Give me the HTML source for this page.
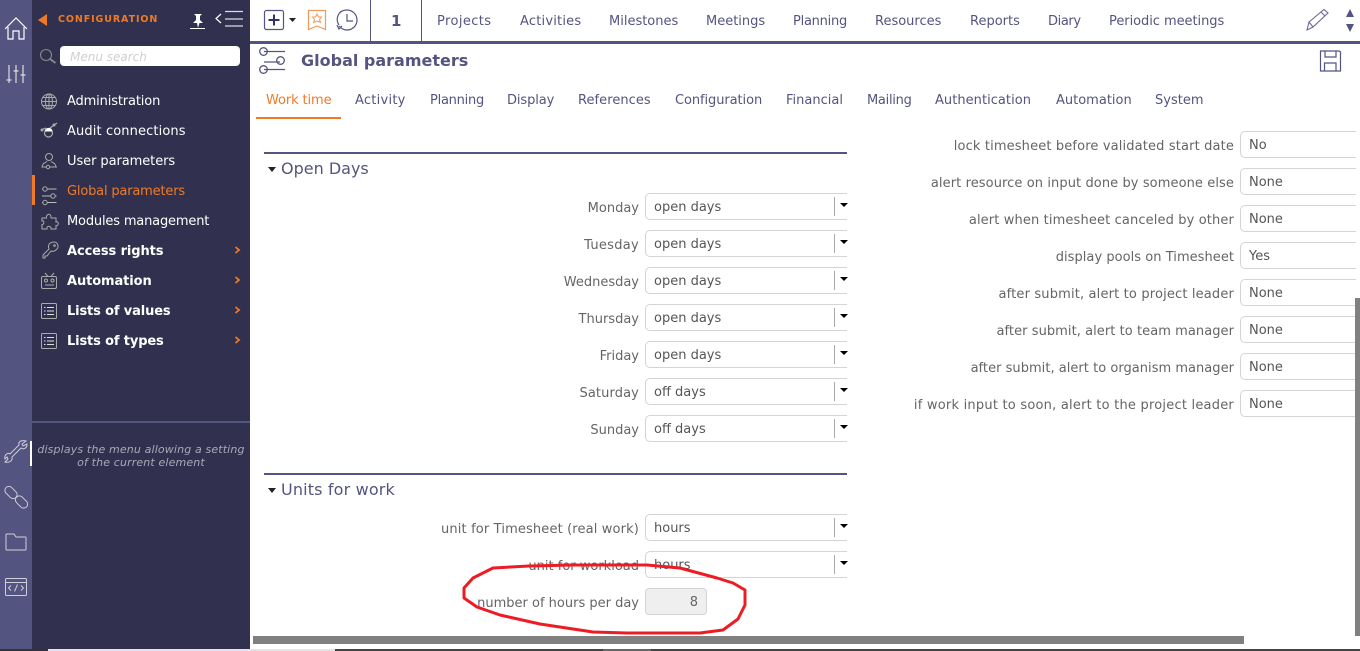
<!DOCTYPE html>
<html><head><meta charset="utf-8"><style>
html,body{margin:0;padding:0;background:#fff;width:1360px;height:651px;overflow:hidden}
body{position:relative;font-family:"DejaVu Sans","Liberation Sans",sans-serif;font-size:13px;color:#656565}
.a{position:absolute;white-space:nowrap}
.m{left:67px;color:#fff;font-size:13px;line-height:16px}
.b{font-weight:bold;letter-spacing:-.1px}
.t{top:14px;color:#545480;font-size:13px;line-height:16px}
.tb{top:93px;color:#545480;font-size:13px;line-height:16px}
.l{text-align:right;line-height:16px;color:#656565}
.s{position:absolute;height:25px;border:1px solid #d4d4d4;border-right:none;border-radius:5px 0 0 5px;background:#fff;box-sizing:content-box;color:#555;line-height:28px;padding-left:8px}
.s i{position:absolute;left:188px;top:3px;width:1px;height:19px;background:#aaa}
.s b{position:absolute;left:194px;top:9px;border:4px solid transparent;border-top:4px solid #000;border-bottom:0}
svg{position:absolute;overflow:visible;fill:none}
</style></head><body>
<div class="a" style="left:0;top:0;width:32px;height:649px;background:#545480"></div>
<div class="a" style="left:32px;top:0;width:218px;height:649px;background:#31314f"></div>
<div class="a" style="left:32px;top:421px;width:218px;height:2px;background:#545480"></div>
<div class="a" style="left:32px;top:175px;width:3px;height:30px;background:#f07a24"></div>
<div class="a" style="left:30px;top:441px;width:2px;height:25px;background:#fff"></div>
<div class="a" style="left:0;top:649px;width:48px;height:2px;background:#333"></div>
<div class="a" style="left:48px;top:649px;width:287px;height:2px;background:#e4e4e4"></div>

<!-- left rail icons -->
<svg style="left:0;top:0" width="32" height="100" stroke="#fff" stroke-width="1.200">
<path d="M5 29 L16 18 L27 29 M8 27 V39 H13 V31 H19 V39 H24 V27"/>
<g stroke="#ddd"><path d="M9 65V83M16 65V83M23 65V83M6.500 80H11.500M13.500 71H18.500M20.500 75H25.500"/></g>
</svg>
<svg style="left:0;top:430px" width="32" height="170" stroke="#cfcfdc" stroke-width="1">
<path d="M19 15C18 11 22 10 26 11L22 14L23 16L27 14C27 18 24 20 21 18L12 27C13 31 9 33 5 32L8 29L7 27L5 29C4 26 7 22 10 24Z"/>
<rect x="4" y="58.500" width="14" height="8" rx="4" transform="rotate(45 11 62.500)"/>
<rect x="14.500" y="68" width="14" height="8" rx="4" transform="rotate(45 21.500 72)"/>
<path d="M6 105V119C6 120 6 120 7 120H25C26 120 26 120 26 119V108C26 107 26 107 25 107H16L14 104H7C6 104 6 104 6 105Z"/>
<rect x="5.500" y="148.500" width="21" height="17" rx="1"/><path d="M6 152.500H26M11 155.500L8.500 158L11 160.500M21 155.500L23.500 158L21 160.500M17.500 154.500L14.500 161.500"/>
</svg>

<!-- sidebar header -->
<div class="a" style="left:38px;top:14px;width:0;height:0;border:6px solid transparent;border-right:9px solid #f07a24;border-left:0"></div>
<div class="a" style="left:58px;top:13px;color:#f07a24;font-size:9.500px;font-weight:bold;letter-spacing:.9px;line-height:14px">CONFIGURATION</div>
<svg style="left:0;top:0" width="250" height="120">
<path d="M194 14H202L200 16V20L203 23H199.500L198 28L197 23H193L196 20V16Z" fill="#fff"/><path d="M190 28.500H205" stroke="#fff"/>
<path d="M221 14L216 18.500L221 23" stroke="#fff" stroke-width="1.200"/><path d="M225 11.500H243M225 19H243M225 26H243" stroke="#ddd" stroke-width="1.300"/>
<circle cx="46" cy="55" r="5.500" stroke="#888" stroke-width="1.100"/><path d="M50 59L55.500 63" stroke="#888" stroke-width="2"/>
<g stroke="#aaa" stroke-width="1"><circle cx="49" cy="101.500" r="7.500"/><ellipse cx="49" cy="101.500" rx="3.500" ry="7.500"/><path d="M41.500 101.500H56.500M42.500 97.500H55.500M42.500 105.500H55.500M49 94V109"/></g>
</svg>
<div class="a" style="left:60px;top:46px;width:180px;height:20px;background:#fff;border-radius:4px;color:#d0d0d0;font-style:italic;font-size:12px;line-height:22px;text-indent:10px">Menu search</div>

<svg style="left:0;top:120px" width="250" height="240" stroke="#aaa" stroke-width="1">
<path d="M41 10L46 8M57 3L50 8" stroke-width="1.300"/><circle cx="54" cy="5" r="1" fill="#aaa"/><circle cx="42" cy="10" r="1" fill="#aaa"/>
<circle cx="48.500" cy="13" r="4" stroke-width="1.200"/><path d="M45.500 11C46 7.500 51 7.500 52 11Z" fill="#fff" stroke="#fff"/>
<circle cx="49" cy="37" r="3.500"/><path d="M42 47C42.500 43 45 43 47 41.500M56 47C55.500 43 53 43 51 41.500"/><path d="M41.500 47H46M50 47H57"/><circle cx="48" cy="47" r="1.700"/>
<path d="M42 69H56.500M42 76H56.500M42 82.500H56.500" stroke="#bbb"/><circle cx="45" cy="69" r="2.200" fill="#31314f"/><circle cx="53" cy="76" r="2.200" fill="#31314f"/><circle cx="45" cy="82.500" r="2.200" fill="#31314f"/>
<path d="M42 98H46.500C45.500 94 51.500 92 51 98H56V102C59 100.500 59 106.500 56 105.500V109H51C52 106 46 105 47 109H42V104.500C44 105 45 100 42 101Z"/>
<path d="M49 129C47 124 51 122 54 122C58 122 59 127 57 129C55 131 53 132 51 131L47 136L45 136L45 138L43 138L43 135Z"/><circle cx="54.500" cy="125.500" r=".8"/>
<rect x="41.500" y="156.500" width="15" height="12" rx="1.500"/><circle cx="46" cy="160.500" r="1.500"/><circle cx="52.500" cy="160.500" r="1.500"/><path d="M45 165H54M45 153L48 156.500M54 153L51 156.500"/>
<rect x="41.500" y="183.500" width="15" height="15" rx="1"/><path d="M47 187.500H54M47 191H54M47 194.500H54M44 187.500H45.500M44 191H45.500M44 194.500H45.500" stroke="#ddd"/>
<rect x="41.500" y="213.500" width="15" height="15" rx="1"/><path d="M47 217.500H54M47 221H54M47 224.500H54M44 217.500H45.500M44 221H45.500M44 224.500H45.500" stroke="#ddd"/>
<g stroke="#f07a24" stroke-width="1.800"><path d="M235.500 127L239 130L235.500 133M235.500 157L239 160L235.500 163M235.500 187L239 190L235.500 193M235.500 217L239 220L235.500 223"/></g>
</svg>

<div class="a m" style="top:94px;letter-spacing:-.14px">Administration</div>
<div class="a m" style="top:124px;letter-spacing:.12px">Audit connections</div>
<div class="a m" style="top:154px;letter-spacing:-.07px">User parameters</div>
<div class="a m" style="top:184px;color:#f07a24;letter-spacing:-.18px">Global parameters</div>
<div class="a m" style="top:214px;letter-spacing:-.17px">Modules management</div>
<div class="a m b" style="top:244px">Access rights</div>
<div class="a m b" style="top:274px">Automation</div>
<div class="a m b" style="top:304px;letter-spacing:-.14px">Lists of values</div>
<div class="a m b" style="top:334px;letter-spacing:-.14px">Lists of types</div>
<div class="a" style="left:32px;top:443px;width:218px;text-align:center;color:#a9a9b8;font-style:italic;font-size:11px;line-height:13px;letter-spacing:.14px">displays the menu allowing a setting<br>of the current element</div>

<!-- top bar -->
<div class="a" style="left:250px;top:41px;width:1110px;height:3px;background:#545480"></div>
<div class="a" style="left:370px;top:0;width:1px;height:41px;background:#545480"></div>
<div class="a" style="left:421px;top:0;width:1px;height:41px;background:#545480"></div>
<svg style="left:250px;top:0" width="120" height="80">
<rect x="14.500" y="10.500" width="19" height="19" rx="2" stroke="#545480" stroke-width="1.200"/><path d="M24 14.500V25.500M18.500 20H29.500" stroke="#31316f" stroke-width="2"/>
<path d="M39 18H46L42.500 22Z" fill="#222"/>
<path d="M58.500 10.500H75.500V29.500L67 26L58.500 29.500Z" stroke="#f2995a" stroke-width="1.200"/><path d="M67 14L68.500 17H71.500L69.500 19.500L70.500 22.500L67 21L63.500 22.500L64.500 19.500L62.500 17H65.500Z" stroke="#f2995a"/>
<path d="M89 25C85 19 88 10 97 10C103 10 107 15 107 20C107 26 102 30 97 30C93 30 91 28 89 26M87 25L89 29L92 26M97 14V21H103" stroke="#545480" stroke-width="1.200"/>
<g stroke="#545480" stroke-width="1.300"><path d="M14 51.500H35M14 62H30M14 69.500H35"/><circle cx="13.500" cy="51.500" r="3.800"/><circle cx="30.500" cy="60.500" r="3.800"/><circle cx="13.500" cy="69.500" r="3.800"/></g>
</svg>
<div class="a" style="left:391px;top:12px;color:#545480;font-weight:bold;font-size:15px;line-height:18px">1</div>
<div class="a t" style="left:437px;letter-spacing:.4px">Projects</div>
<div class="a t" style="left:520px;letter-spacing:.2px">Activities</div>
<div class="a t" style="left:609px">Milestones</div>
<div class="a t" style="left:706px">Meetings</div>
<div class="a t" style="left:793px;letter-spacing:-.25px">Planning</div>
<div class="a t" style="left:875px">Resources</div>
<div class="a t" style="left:970px">Reports</div>
<div class="a t" style="left:1048px;letter-spacing:-.4px">Diary</div>
<div class="a t" style="left:1109px;letter-spacing:-.05px">Periodic meetings</div>
<svg style="left:1300px;top:0" width="60" height="80">
<path d="M7 30L9 22L24 9.500L28 13L13 27Z M9 22L13 27M21 12L25 16" stroke="#6a6a96" stroke-width="1.100"/>
<path d="M50 9L46 17H54Z M46 24H54L50 32Z" fill="#545480"/>
<path d="M20.500 51H39L40.500 52V71H20.500ZM25 51V57H36V51M24.500 71V63H36V71" stroke="#545480" stroke-width="1.200"/>
</svg>

<!-- heading + tabs -->
<div class="a" style="left:301px;top:51px;color:#545480;font-size:16px;font-weight:bold;line-height:20px">Global parameters</div>
<div class="a tb" style="left:266px;color:#f07a24;letter-spacing:-.1px">Work time</div>
<div class="a" style="left:256px;top:117px;width:85px;height:2px;background:#f07a24"></div>
<div class="a tb" style="left:355px;letter-spacing:.25px">Activity</div>
<div class="a tb" style="left:430px;letter-spacing:-.25px">Planning</div>
<div class="a tb" style="left:507px;letter-spacing:-.1px">Display</div>
<div class="a tb" style="left:578px;letter-spacing:.05px">References</div>
<div class="a tb" style="left:675px;letter-spacing:-.08px">Configuration</div>
<div class="a tb" style="left:786px">Financial</div>
<div class="a tb" style="left:867px;letter-spacing:-.28px">Mailing</div>
<div class="a tb" style="left:935px;letter-spacing:.04px">Authentication</div>
<div class="a tb" style="left:1056px">Automation</div>
<div class="a tb" style="left:1155px">System</div>

<!-- Open Days -->
<div class="a" style="left:264px;top:152px;width:583px;height:2px;background:#545480"></div>
<div class="a" style="left:268px;top:167px;border:4px solid transparent;border-top:5px solid #222;border-bottom:0"></div>
<div class="a" style="left:281px;top:159px;font-size:16px;line-height:19px;color:#545480">Open Days</div>
<div class="a" style="left:264px;top:473px;width:583px;height:2px;background:#545480"></div>
<div class="a" style="left:268px;top:488px;border:4px solid transparent;border-top:5px solid #222;border-bottom:0"></div>
<div class="a" style="left:281px;top:480px;font-size:16px;line-height:19px;color:#545480;letter-spacing:.15px">Units for work</div>

<div class="a l" style="right:721px;top:201px">Monday</div><div class="s" style="left:645px;top:193px;width:193px">open days<i></i><b></b></div>
<div class="a l" style="right:721px;top:238px;letter-spacing:.28px">Tuesday</div><div class="s" style="left:645px;top:230px;width:193px">open days<i></i><b></b></div>
<div class="a l" style="right:721px;top:275px">Wednesday</div><div class="s" style="left:645px;top:267px;width:193px">open days<i></i><b></b></div>
<div class="a l" style="right:721px;top:312px">Thursday</div><div class="s" style="left:645px;top:304px;width:193px">open days<i></i><b></b></div>
<div class="a l" style="right:721px;top:349px">Friday</div><div class="s" style="left:645px;top:341px;width:193px">open days<i></i><b></b></div>
<div class="a l" style="right:721px;top:386px;letter-spacing:.12px">Saturday</div><div class="s" style="left:645px;top:378px;width:193px">off days<i></i><b></b></div>
<div class="a l" style="right:721px;top:423px">Sunday</div><div class="s" style="left:645px;top:415px;width:193px">off days<i></i><b></b></div>

<div class="a l" style="right:721px;top:522px;letter-spacing:.14px">unit for Timesheet (real work)</div><div class="s" style="left:645px;top:514px;width:193px">hours<i></i><b></b></div>
<div class="a l" style="right:721px;top:559px">unit for workload</div><div class="s" style="left:645px;top:551px;width:193px">hours<i></i><b></b></div>
<div class="a l" style="right:721px;top:596px">number of hours per day</div>
<div class="a" style="left:645px;top:588px;width:60px;height:25px;border:1px solid #d4d4d4;border-radius:4px;background:#efefef;text-align:right;line-height:27px"><span style="margin-right:8px">8</span></div>

<!-- right column -->
<div class="a l" style="right:126px;top:139px;letter-spacing:.143px">lock timesheet before validated start date</div><div class="s" style="left:1240px;top:131px;width:107px">No</div>
<div class="a l" style="right:126px;top:176px;letter-spacing:.09px">alert resource on input done by someone else</div><div class="s" style="left:1240px;top:168px;width:107px">None</div>
<div class="a l" style="right:126px;top:213px;letter-spacing:.13px">alert when timesheet canceled by other</div><div class="s" style="left:1240px;top:205px;width:107px">None</div>
<div class="a l" style="right:126px;top:250px;letter-spacing:.04px">display pools on Timesheet</div><div class="s" style="left:1240px;top:242px;width:107px">Yes</div>
<div class="a l" style="right:126px;top:287px;letter-spacing:.16px">after submit, alert to project leader</div><div class="s" style="left:1240px;top:279px;width:107px">None</div>
<div class="a l" style="right:126px;top:324px;letter-spacing:.06px">after submit, alert to team manager</div><div class="s" style="left:1240px;top:316px;width:107px">None</div>
<div class="a l" style="right:126px;top:361px;letter-spacing:.03px">after submit, alert to organism manager</div><div class="s" style="left:1240px;top:353px;width:107px">None</div>
<div class="a l" style="right:126px;top:398px;letter-spacing:.22px">if work input to soon, alert to the project leader</div><div class="s" style="left:1240px;top:390px;width:107px">None</div>

<!-- scrollbars -->
<div class="a" style="left:1355px;top:298px;width:5px;height:338px;background:#808080"></div>
<div class="a" style="left:253px;top:636px;width:991px;height:8px;background:#808080"></div>
<div class="a" style="left:335px;top:649px;width:268px;height:2px;background:#444"></div>
<div class="a" style="left:603px;top:649px;width:48px;height:2px;background:#666"></div>
<div class="a" style="left:651px;top:649px;width:709px;height:2px;background:#444"></div>

<!-- red ellipse -->
<svg style="left:0;top:0" width="1360" height="651">
<path d="M493 568L473 578L464 588L464 598L477 607L500 615L540 624L593 632L627 633L700 633L723 630L738 619L745 605L745 590L733 583L717 578L680 568L647 565L573 565L529 566Z" stroke="#ed1c24" stroke-width="3" stroke-linejoin="round"/>
</svg>
</body></html>
